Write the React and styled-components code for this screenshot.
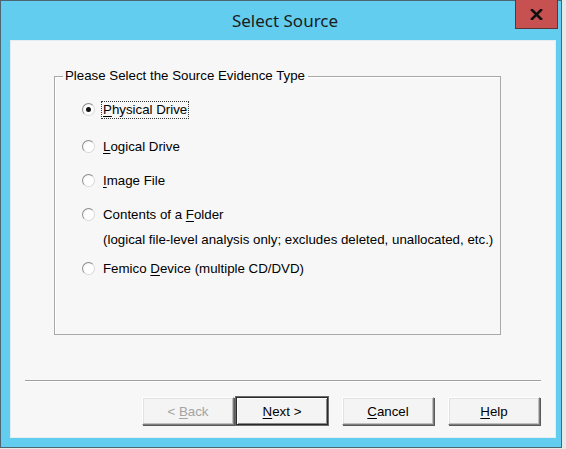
import React from "react";
import styled, { createGlobalStyle } from "styled-components";

const GlobalStyle = createGlobalStyle`
  html, body {
    margin: 0;
    padding: 0;
    background: #e8e8e8;
  }
  body {
    font-family: "Liberation Sans", Arial, sans-serif;
    font-size: 13.3px;
    color: #000;
  }
`;

const Window = styled.div`
  position: relative;
  box-sizing: border-box;
  width: 562px;
  height: 448px;
  border: 1px solid #4c6673;
  background: #63cdef;
  display: flex;
  flex-direction: column;
  padding: 0 5px 9px 9px;
`;

const TitleBar = styled.div`
  height: 39px;
  display: flex;
  align-items: center;
  justify-content: center;
  padding-bottom: 1px;
  box-sizing: border-box;
`;

const Title = styled.div`
  font-family: "Noto Sans", "Open Sans", sans-serif;
  font-size: 17px;
  color: #1b1b1b;
  margin-left: 4px;
`;

const CloseButton = styled.div`
  position: absolute;
  top: -1px;
  right: 3px;
  width: 43px;
  height: 29px;
  box-sizing: border-box;
  background: #c75050;
  border: 1px solid #5a3636;
  border-top: none;
  display: flex;
  align-items: center;
  justify-content: center;
`;

const Client = styled.div`
  flex: 1;
  background: #f7f7f7;
  border: 1px solid #e4eef2;
  box-sizing: border-box;
  display: flex;
  flex-direction: column;
  padding: 27px 0 0 0;
`;

const Group = styled.fieldset`
  margin: 0 0 0 43px;
  padding: 0;
  width: 447px;
  height: 267px;
  box-sizing: border-box;
  border: 1px solid #a8a8a8;
  box-shadow: inset 1px 1px 0 #ffffff;
`;

const Legend = styled.legend`
  margin-left: 8px;
  padding: 0 3px 0 2px;
  line-height: 16px;
`;

const Options = styled.div`
  display: flex;
  flex-direction: column;
  padding-left: 27px;
`;

const Option = styled.div`
  display: flex;
  align-items: flex-start;
  margin-top: ${(p) => p.$gap}px;
`;

const Radio = styled.span`
  width: 13px;
  height: 13px;
  box-sizing: border-box;
  border-radius: 50%;
  border: 1px solid #8d8d8d;
  border-right-color: #d8d8d8;
  border-bottom-color: #d8d8d8;
  background: radial-gradient(circle at 60% 60%, #ffffff 50%, #e4e4e4 100%);
  margin-top: 2px;
  display: flex;
  align-items: center;
  justify-content: center;
  flex-shrink: 0;
  &::after {
    content: "";
    display: ${(p) => (p.$checked ? "block" : "none")};
    width: 5px;
    height: 5px;
    border-radius: 50%;
    background: #111;
  }
`;

const LabelBox = styled.div`
  margin-left: 6px;
  display: flex;
  flex-direction: column;
`;

const Label = styled.span`
  line-height: 16px;
  padding: 0 1px;
  border: 1px dotted ${(p) => (p.$focus ? "#333" : "transparent")};
  white-space: nowrap;
`;

const Note = styled.span`
  line-height: 16px;
  padding: 0 2px;
  margin-top: 8px;
  white-space: nowrap;
`;

const Separator = styled.div`
  margin: 45px 0 0 14px;
  width: 516px;
  height: 1px;
  background: #a0a0a0;
  border-bottom: 1px solid #ffffff;
`;

const ButtonRow = styled.div`
  display: flex;
  margin: 15px 0 0 131px;
`;

const Button = styled.button`
  width: 92px;
  height: 28px;
  margin-left: ${(p) => p.$gap || 0}px;
  box-sizing: border-box;
  background: #f4f4f4;
  font-family: "Liberation Sans", Arial, sans-serif;
  font-size: 13.3px;
  color: ${(p) => (p.disabled ? "#a3a3a3" : "#000")};
  padding: 0;
  border: 1px solid;
  border-color: ${(p) =>
    p.$default ? "#2b2b2b" : "#ffffff #7c7c7c #7c7c7c #ffffff"};
  box-shadow: ${(p) =>
    p.$default
      ? "inset 1px 1px 0 #ffffff, inset -1px -1px 0 #8a8a8a, 0 0 0 1px #6a6a6a"
      : "1px 1px 0 #5a5a5a, inset -1px -1px 0 #c0c0c0, inset 1px 1px 0 #e2e2e2"};
`;

const Key = styled.u`
  text-decoration-thickness: 1px;
  text-underline-offset: 2px;
`;

const CloseIcon = () => (
  <svg width="13" height="11" viewBox="0 0 13 11">
    <path d="M2 1 L11 10 M11 1 L2 10" stroke="#111" strokeWidth="2.6" strokeLinecap="square" />
  </svg>
);

export default function App() {
  return (
    <>
      <GlobalStyle />
      <Window>
        <TitleBar>
          <Title>Select Source</Title>
        </TitleBar>
        <CloseButton>
          <CloseIcon />
        </CloseButton>
        <Client>
          <Group>
            <Legend>Please Select the Source Evidence Type</Legend>
            <Options>
              <Option $gap={17}>
                <Radio $checked />
                <LabelBox>
                  <Label $focus>
                    <Key>P</Key>hysical Drive
                  </Label>
                </LabelBox>
              </Option>
              <Option $gap={19}>
                <Radio />
                <LabelBox>
                  <Label>
                    <Key>L</Key>ogical Drive
                  </Label>
                </LabelBox>
              </Option>
              <Option $gap={16}>
                <Radio />
                <LabelBox>
                  <Label>
                    <Key>I</Key>mage File
                  </Label>
                </LabelBox>
              </Option>
              <Option $gap={16}>
                <Radio />
                <LabelBox>
                  <Label>
                    Contents of a <Key>F</Key>older
                  </Label>
                  <Note>(logical file-level analysis only; excludes deleted, unallocated, etc.)</Note>
                </LabelBox>
              </Option>
              <Option $gap={12}>
                <Radio />
                <LabelBox>
                  <Label>
                    Femico <Key>D</Key>evice (multiple CD/DVD)
                  </Label>
                </LabelBox>
              </Option>
            </Options>
          </Group>
          <Separator />
          <ButtonRow>
            <Button disabled>
              &lt; <Key>B</Key>ack
            </Button>
            <Button $default $gap={2}>
              <Key>N</Key>ext &gt;
            </Button>
            <Button $gap={14}>
              <Key>C</Key>ancel
            </Button>
            <Button $gap={14}>
              <Key>H</Key>elp
            </Button>
          </ButtonRow>
        </Client>
      </Window>
    </>
  );
}
